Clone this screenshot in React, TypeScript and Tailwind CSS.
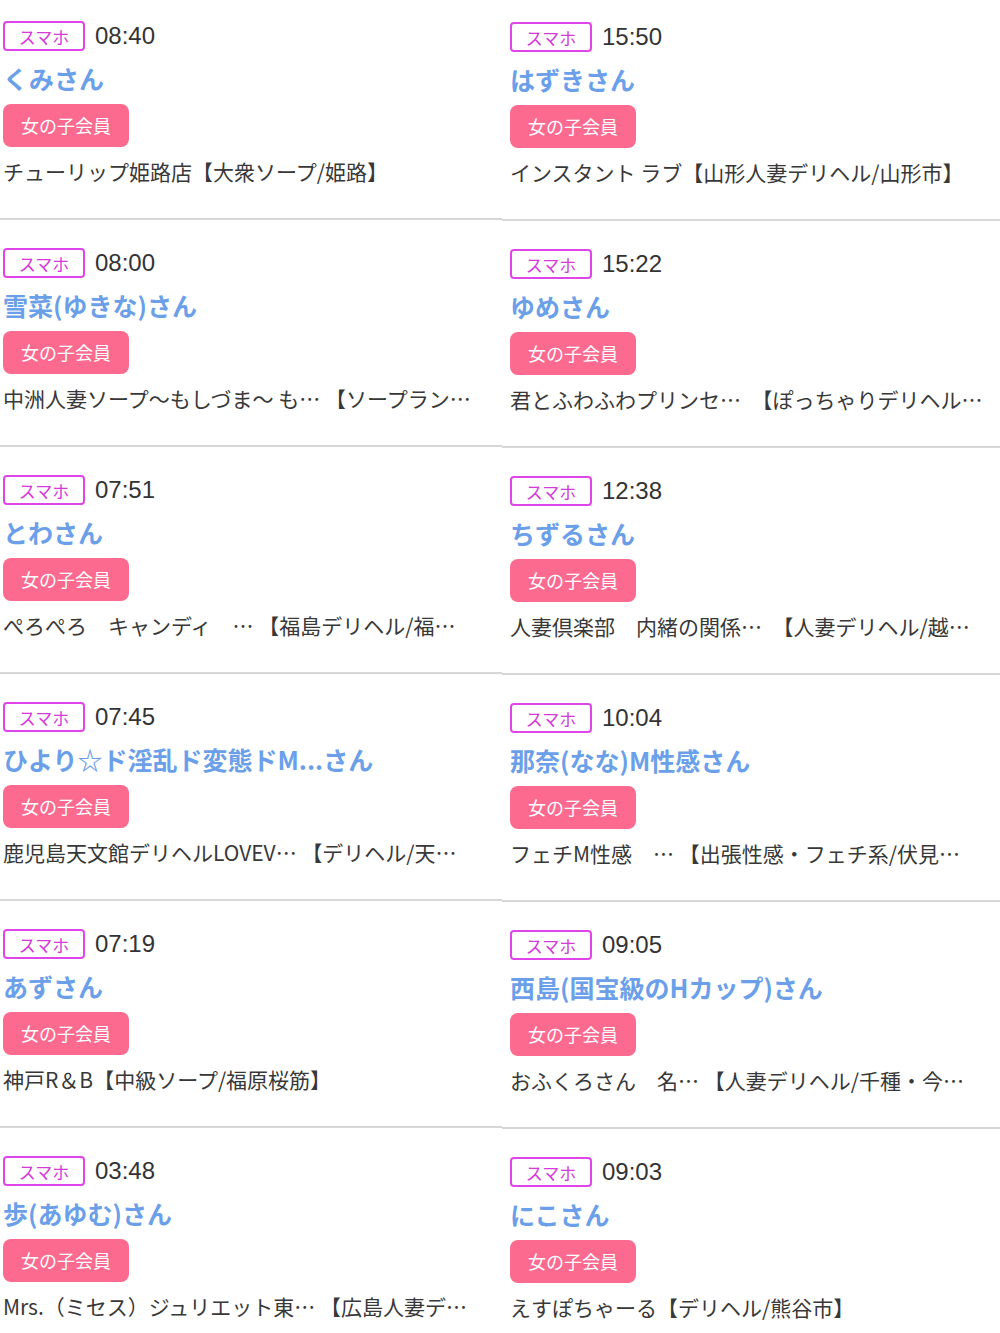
import React from 'react';

type Item = { time: string; name: string; shop: string; area: string };

const left: Item[] = [
    { time: '08:40', name: 'くみさん', shop: 'チューリップ姫路店', area: '【大衆ソープ/姫路】' },
    { time: '08:00', name: '雪菜(ゆきな)さん', shop: '中洲人妻ソープ〜もしづま〜 も… ', area: '【ソープラン…' },
    { time: '07:51', name: 'とわさん', shop: 'ぺろぺろ　キャンディ　… ', area: '【福島デリヘル/福…' },
    { time: '07:45', name: 'ひより☆ド淫乱ド変態ドM...さん', shop: '鹿児島天文館デリヘルLOVEV⋯ ', area: '【デリヘル/天…' },
    { time: '07:19', name: 'あずさん', shop: '神戸R＆B', area: '【中級ソープ/福原桜筋】' },
    { time: '03:48', name: '歩(あゆむ)さん', shop: 'Mrs.（ミセス）ジュリエット東… ', area: '【広島人妻デ…' },
];

const right: Item[] = [
    { time: '15:50', name: 'はずきさん', shop: 'インスタント ラブ', area: '【山形人妻デリヘル/山形市】' },
    { time: '15:22', name: 'ゆめさん', shop: '君とふわふわプリンセ…　', area: '【ぽっちゃりデリヘル…' },
    { time: '12:38', name: 'ちずるさん', shop: '人妻倶楽部　内緒の関係…　', area: '【人妻デリヘル/越…' },
    { time: '10:04', name: '那奈(なな)M性感さん', shop: 'フェチM性感　… ', area: '【出張性感・フェチ系/伏見…' },
    { time: '09:05', name: '西島(国宝級のHカップ)さん', shop: 'おふくろさん　名… ', area: '【人妻デリヘル/千種・今…' },
    { time: '09:03', name: 'にこさん', shop: 'えすぽちゃーる', area: '【デリヘル/熊谷市】' },
];

const Row = ({ item, pad }: { item: Item; pad: string }) => (
    <div className={`h-[227px] border-b-2 border-[#d6d6d6] pt-[28px] ${pad}`}>
        <div className="flex h-[30px] items-center">
            <span className="flex h-[30px] w-[82px] items-center justify-center rounded-[4px] border-2 border-[#df45e8] text-[17px] leading-none text-[#d53adb]">
                スマホ
            </span>
            <span className="ml-[10px] font-['Liberation_Sans',sans-serif] text-[24px] leading-none text-[#333]">
                {item.time}
            </span>
        </div>
        <div className="mt-[9px] whitespace-nowrap text-[25px] font-bold leading-[36px] text-[#6b9fe9]">
            {item.name}
        </div>
        <div className="mt-[8px] flex h-[43px] w-[126px] items-center justify-center rounded-[8px] bg-[#fd6a8f] text-[18px] text-white">
            女の子会員
        </div>
        <div className="mt-[10px] overflow-hidden whitespace-nowrap text-[21px] leading-[28px] text-[#383838]">
            {item.shop}
            {item.area}
        </div>
    </div>
);

export default function App() {
    return (
        <div lang="ja" className="h-[1333px] w-[1000px] overflow-hidden bg-white font-['Noto_Sans_CJK_JP',sans-serif]">
            <div className="flex">
                <div className="-mt-[7px] w-[502px]">
                    {left.map((item) => (
                        <Row key={item.time} item={item} pad="pl-[3px]" />
                    ))}
                </div>
                <div className="-mt-[6px] w-[498px]">
                    {right.map((item) => (
                        <Row key={item.time} item={item} pad="pl-[8px]" />
                    ))}
                </div>
            </div>
        </div>
    );
}
